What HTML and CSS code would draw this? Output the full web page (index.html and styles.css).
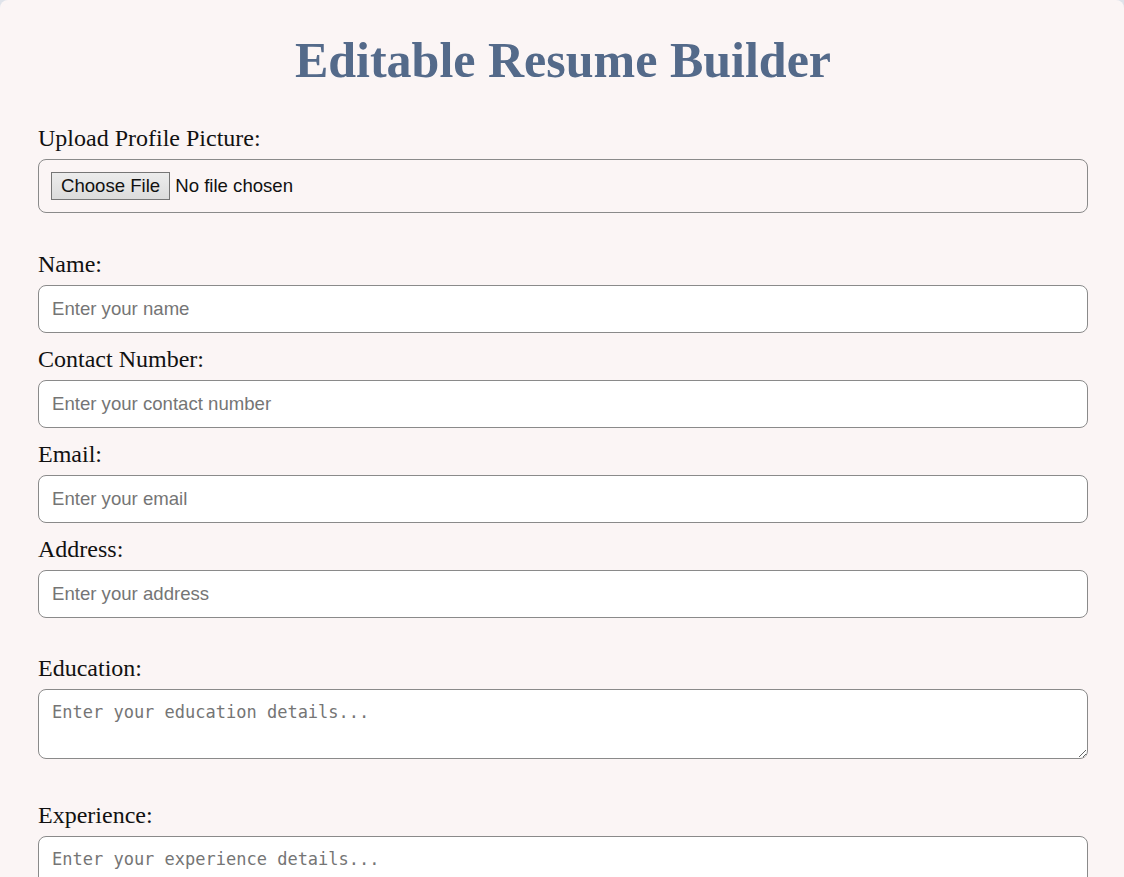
FILE: index.html
```html
<!DOCTYPE html>
<html lang="en">
<head>
<meta charset="utf-8">
<title>Editable Resume Builder</title>
<link rel="stylesheet" href="styles.css">
</head>
<body>
<div class="container">
  <h1 class="title">Editable Resume Builder</h1>
  <form class="form">
    <div class="field">
      <label class="label" for="pic">Upload Profile Picture:</label>
      <div class="file-box">
        <input class="file" id="pic" type="file">
      </div>
    </div>
    <div class="group">
      <div class="field">
        <label class="label" for="name">Name:</label>
        <input class="input" id="name" type="text" placeholder="Enter your name">
      </div>
      <div class="field">
        <label class="label" for="contact">Contact Number:</label>
        <input class="input" id="contact" type="text" placeholder="Enter your contact number">
      </div>
      <div class="field">
        <label class="label" for="email">Email:</label>
        <input class="input" id="email" type="text" placeholder="Enter your email">
      </div>
      <div class="field">
        <label class="label" for="address">Address:</label>
        <input class="input" id="address" type="text" placeholder="Enter your address">
      </div>
    </div>
    <div class="field section-edu">
      <label class="label" for="edu">Education:</label>
      <textarea class="textarea" id="edu" placeholder="Enter your education details..."></textarea>
    </div>
    <div class="field section-exp">
      <label class="label" for="exp">Experience:</label>
      <textarea class="textarea" id="exp" placeholder="Enter your experience details..."></textarea>
    </div>
  </form>
</div>
</body>
</html>
```
FILE: styles.css
```css
html, body {
  margin: 0;
  padding: 0;
  background: #dfe3ea;
}
.container {
  background: #fbf5f5;
  border-radius: 8px;
  min-height: 877px;
  padding: 30px 36px 0 38px;
  box-sizing: border-box;
  font-family: "Liberation Serif", "Times New Roman", serif;
}
.title {
  margin: 0 0 35px 0;
  text-align: center;
  font-size: 50px;
  font-weight: bold;
  color: #546a8a;
  line-height: 60px;
}
.form {
  display: flex;
  flex-direction: column;
}
.field {
  display: flex;
  flex-direction: column;
}
.label {
  font-size: 24px;
  color: #111;
  line-height: 27px;
  margin-bottom: 7px;
}
.file-box {
  border: 1px solid #8a8a8a;
  border-radius: 8px;
  padding: 13px 12px;
  height: 54px;
  box-sizing: border-box;
  display: flex;
  align-items: center;
  background: #fbf5f5;
  margin-bottom: 38px;
}
.file {
  font-family: "Liberation Sans", Arial, sans-serif;
  font-size: 18.6px;
  color: #111;
}
.file::file-selector-button {
  font-family: "Liberation Sans", Arial, sans-serif;
  font-size: 18.6px;
  color: #111;
  background: linear-gradient(#ececec, #dcdcdc);
  border: 1px solid #767676;
  border-radius: 0;
  height: 28px;
  padding: 0 9px;
  margin-right: 5px;
}
.group {
  display: flex;
  flex-direction: column;
  gap: 13px;
}
.input {
  height: 48px;
  box-sizing: border-box;
  border: 1px solid #8a8a8a;
  border-radius: 8px;
  padding: 0 13px;
  font-family: "Liberation Sans", Arial, sans-serif;
  font-size: 18.6px;
  background: #fff;
}
.input::placeholder {
  color: #757575;
}
.section-edu {
  margin-top: 37px;
}
.section-exp {
  margin-top: 43px;
}
.textarea {
  height: 70px;
  box-sizing: border-box;
  border: 1px solid #8a8a8a;
  border-radius: 8px;
  padding: 12px 13px;
  font-family: "DejaVu Sans Mono", monospace;
  font-size: 17px;
  background: #fff;
  resize: vertical;
}
.textarea::placeholder {
  color: #757575;
}
```
